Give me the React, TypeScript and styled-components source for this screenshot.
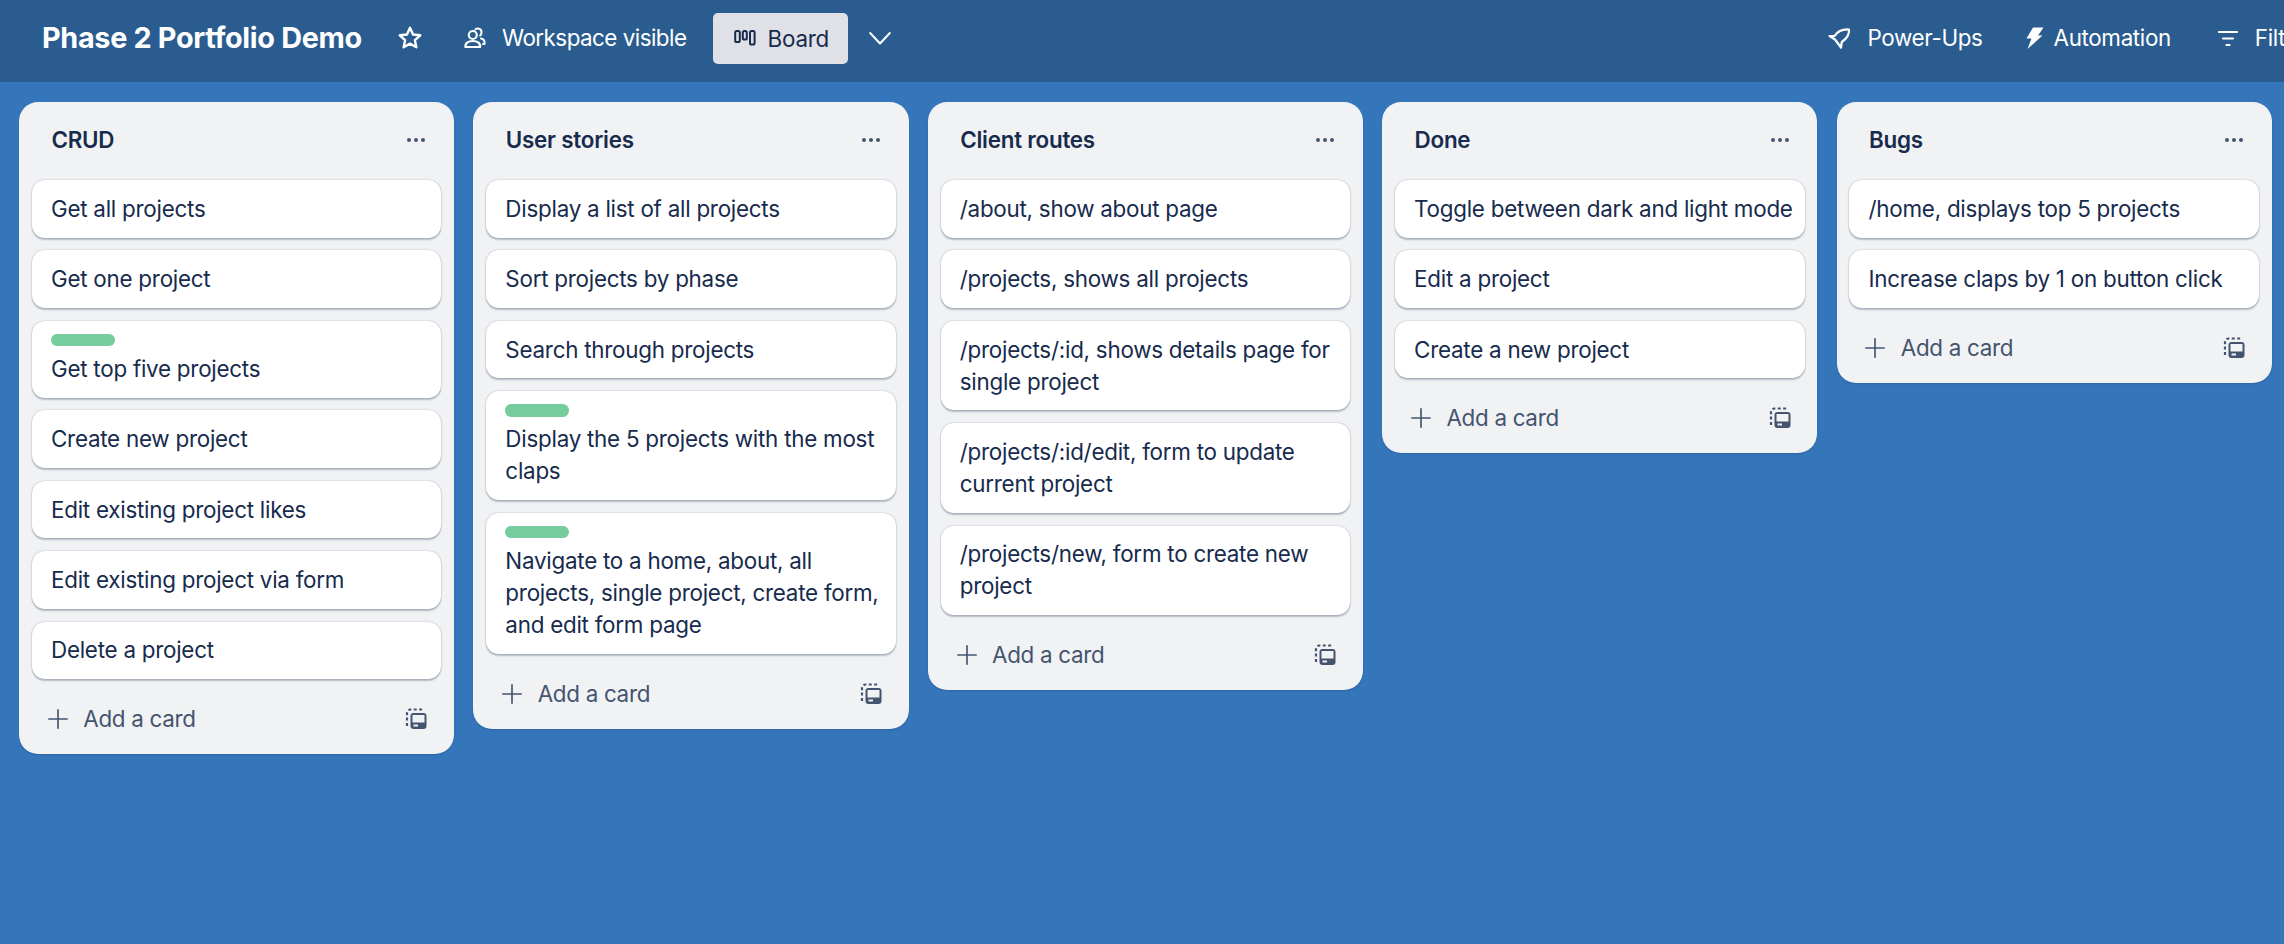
import React from "react";
import styled, { createGlobalStyle } from "styled-components";

const Global = createGlobalStyle`
  html, body { margin: 0; padding: 0; background: #3576bb; }
  body { font-family: Inter, "Noto Sans", sans-serif; overflow: hidden; -webkit-font-smoothing: antialiased; }
  * { box-sizing: border-box; }
`;

const Page = styled.div`
  width: 2284px;
  height: 944px;
  background: #3576bb;
  overflow: hidden;
`;

const TopBar = styled.header`
  height: 82px;
  background: #2a5c8f;
  display: flex;
  align-items: center;
  padding: 0 0 6px 42px;
  color: #fff;
  white-space: nowrap;
`;

const BoardTitle = styled.h1`
  margin: 0;
  font-size: 28.8px;
  line-height: 38px;
  font-weight: 700;
  letter-spacing: -0.32px;
  color: #fff;
  width: 319px;
  flex: none;
`;

const NavItem = styled.div<{ $left?: number; $gap?: number; $track?: number }>`
  display: flex;
  align-items: center;
  flex: none;
  gap: ${(p) => p.$gap ?? 10}px;
  margin-left: ${(p) => p.$left ?? 0}px;
  font-size: 22.4px;
  line-height: 32px;
  letter-spacing: ${(p) => p.$track ?? -0.35}px;
  color: #fff;
`;

const BoardButton = styled.div`
  display: flex;
  align-items: center;
  flex: none;
  gap: 10px;
  width: 135px;
  height: 51px;
  margin-left: 27px;
  padding-left: 20px;
  background: #dfe1e6;
  border-radius: 5px;
  font-size: 22.4px;
  letter-spacing: -0.2px;
  color: #172b4d;
`;

const Canvas = styled.main`
  display: flex;
  align-items: flex-start;
  gap: 19.2px;
  padding: 20px 0 0 19px;
`;

const List = styled.section`
  width: 435.2px;
  flex: none;
  background: #f1f2f4;
  border-radius: 19.2px;
  padding: 0 12.8px;
  box-shadow: 0 1px 2px rgba(9, 30, 66, 0.2);
`;

const ListHeader = styled.div`
  height: 78px;
  display: flex;
  align-items: center;
  justify-content: space-between;
  padding: 0 13px 1.5px 19.6px;
`;

const ListTitle = styled.h2`
  margin: 0;
  font-size: 22.4px;
  line-height: 32px;
  font-weight: 600;
  letter-spacing: -0.22px;
  color: #172b4d;
`;

const Cards = styled.div`
  display: flex;
  flex-direction: column;
  gap: 12.8px;
`;

const Card = styled.article`
  background: #fff;
  border-radius: 12.8px;
  padding: 12.8px 6px 12.8px 19.2px;
  font-size: 22.4px;
  line-height: 32px;
  letter-spacing: -0.25px;
  color: #172b4d;
  box-shadow: 0 1.6px 1.6px rgba(9, 30, 66, 0.25), 0 0 1.6px rgba(9, 30, 66, 0.31);
`;

const Label = styled.div`
  width: 64px;
  height: 12.8px;
  margin-bottom: 6.4px;
  border-radius: 6.4px;
  background: #75cc9c;
`;

const Footer = styled.div`
  height: 75px;
  padding: 5px 13px 0 15px;
  display: flex;
  align-items: center;
  justify-content: space-between;
  color: #44546f;
`;

const AddCard = styled.div`
  display: flex;
  align-items: center;
  gap: 14.5px;
  font-size: 22.4px;
  line-height: 32px;
  letter-spacing: -0.3px;
  color: #44546f;
`;

const Icon = styled.svg<{ $size?: number; $tint?: string }>`
  width: ${(p) => p.$size ?? 24}px;
  height: ${(p) => p.$size ?? 24}px;
  flex: none;
  display: block;
  ${(p) => (p.$tint ? `color: ${p.$tint};` : "")}
`;

const stroke = { fill: "none", stroke: "currentColor", strokeWidth: 2, strokeLinecap: "round", strokeLinejoin: "round" } as const;

const StarIcon = () => (
  <Icon viewBox="0 0 24 24" $size={26}>
    <path d="M12 2.600l2.800 6.200 6.700.7-5 4.500 1.400 6.600L12 17.200l-5.900 3.400 1.400-6.600-5-4.500 6.700-.7z" {...stroke} strokeWidth={2.200} />
  </Icon>
);
const PeopleIcon = () => (
  <Icon viewBox="0 0 24 24" $size={24}>
    <path d="M9.800 13a4 4 0 1 0 0-8 4 4 0 0 0 0 8zM2.500 21c-.6-3.800 2.600-6 7.300-6s7.900 2.200 7.300 6z" {...stroke} strokeWidth={2.200} />
    <path d="M12.500 3.300A3.700 3.700 0 0 1 18.500 6.500c0 1.300-.5 2.300-1.300 3M18 12.500c2.700.6 4 2.500 3.500 5.500h-1.500" {...stroke} />
  </Icon>
);
const BoardIcon = () => (
  <Icon viewBox="0 0 24 24" $size={24} $tint="#172b4d">
    <rect x="2.200" y="5" width="4.600" height="11" rx="1.600" {...stroke} />
    <rect x="9.800" y="5" width="4" height="8.500" rx="1.600" {...stroke} />
    <rect x="17" y="5" width="4.600" height="13.500" rx="1.600" {...stroke} />
  </Icon>
);
const ChevronIcon = () => (
  <Icon viewBox="0 0 24 24" $size={26}>
    <path d="M3 7.500l9 9.500 9-9.500" {...stroke} />
  </Icon>
);
const RocketIcon = () => (
  <Icon viewBox="0 0 24 24" $size={24}>
    <path d="M22 3.500C16 3 10.500 5.500 7.500 10H2.500l5.500 3.500 4.500 6 1.500 2 .8-5.500C19 13 22.500 9 22 3.500z" {...stroke} strokeWidth={2.200} />
  </Icon>
);
const BoltIcon = () => (
  <Icon viewBox="0 0 24 24" $size={24}>
    <path d="M11 1.500h10.500L16 9.500h4.500L5.500 23l4-10.500H4.500z" fill="currentColor" />
  </Icon>
);
const FilterIcon = () => (
  <Icon viewBox="0 0 24 24" $size={24}>
    <path d="M3 6h18M7 12.500h10M10.500 19h3" {...stroke} strokeWidth={2.200} />
  </Icon>
);
const DotsIcon = () => (
  <Icon viewBox="0 0 24 24" $size={24} $tint="#44546f">
    <circle cx="5" cy="12" r="2" fill="currentColor" />
    <circle cx="12" cy="12" r="2" fill="currentColor" />
    <circle cx="19" cy="12" r="2" fill="currentColor" />
  </Icon>
);
const PlusIcon = () => (
  <Icon viewBox="0 0 24 24" $size={22}>
    <path d="M12 2v20M2 12h20" {...stroke} strokeWidth={1.800} />
  </Icon>
);
const TemplateIcon = () => (
  <Icon viewBox="0 0 24 24" $size={24}>
    <path d="M3 19V6a3.500 3.500 0 0 1 3.500-3.500H19" fill="none" stroke="currentColor" strokeWidth="2.200" strokeDasharray="3 2.400" />
    <rect x="6.500" y="6" width="16" height="16" rx="3" fill="currentColor" />
    <rect x="8.500" y="8" width="12" height="7.500" fill="#f1f2f4" />
    <rect x="9.500" y="17.500" width="4.500" height="2" fill="#f1f2f4" />
  </Icon>
);

type CardData = { text: string; label?: boolean };

const lists: { title: string; cards: CardData[] }[] = [
  {
    title: "CRUD",
    cards: [
      { text: "Get all projects" },
      { text: "Get one project" },
      { text: "Get top five projects", label: true },
      { text: "Create new project" },
      { text: "Edit existing project likes" },
      { text: "Edit existing project via form" },
      { text: "Delete a project" },
    ],
  },
  {
    title: "User stories",
    cards: [
      { text: "Display a list of all projects" },
      { text: "Sort projects by phase" },
      { text: "Search through projects" },
      { text: "Display the 5 projects with the most claps", label: true },
      { text: "Navigate to a home, about, all projects, single project, create form, and edit form page", label: true },
    ],
  },
  {
    title: "Client routes",
    cards: [
      { text: "/about, show about page" },
      { text: "/projects, shows all projects" },
      { text: "/projects/:id, shows details page for single project" },
      { text: "/projects/:id/edit, form to update current project" },
      { text: "/projects/new, form to create new project" },
    ],
  },
  {
    title: "Done",
    cards: [
      { text: "Toggle between dark and light mode" },
      { text: "Edit a project" },
      { text: "Create a new project" },
    ],
  },
  {
    title: "Bugs",
    cards: [
      { text: "/home, displays top 5 projects" },
      { text: "Increase claps by 1 on button click" },
    ],
  },
];

export default function App() {
  return (
    <Page>
      <Global />
      <TopBar>
        <BoardTitle>Phase 2 Portfolio Demo</BoardTitle>
        <NavItem $left={36}><StarIcon /></NavItem>
        <NavItem $left={40} $gap={15} $track={-0.52}><PeopleIcon />Workspace visible</NavItem>
        <BoardButton><BoardIcon />Board</BoardButton>
        <NavItem $left={19}><ChevronIcon /></NavItem>
        <NavItem $left={934} $gap={16}><RocketIcon />Power-Ups</NavItem>
        <NavItem $left={39} $gap={8}><BoltIcon />Automation</NavItem>
        <NavItem $left={45} $gap={15}><FilterIcon />Filters</NavItem>
      </TopBar>
      <Canvas>
        {lists.map((list) => (
          <List key={list.title}>
            <ListHeader>
              <ListTitle>{list.title}</ListTitle>
              <DotsIcon />
            </ListHeader>
            <Cards>
              {list.cards.map((card, i) => (
                <Card key={i}>
                  {card.label && <Label />}
                  {card.text}
                </Card>
              ))}
            </Cards>
            <Footer>
              <AddCard><PlusIcon />Add a card</AddCard>
              <TemplateIcon />
            </Footer>
          </List>
        ))}
      </Canvas>
    </Page>
  );
}
